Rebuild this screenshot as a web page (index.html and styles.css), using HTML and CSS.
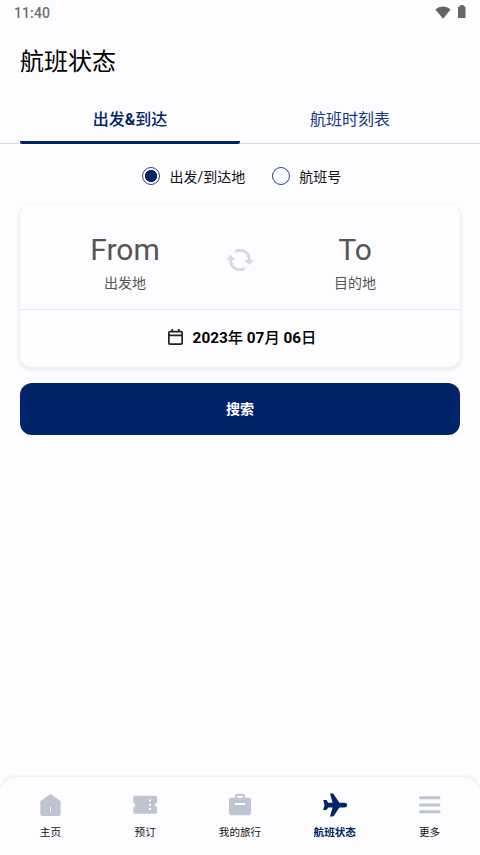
FILE: index.html
```html
<!DOCTYPE html>
<html lang="zh-CN">
<head>
<meta charset="utf-8">
<meta name="viewport" content="width=device-width, initial-scale=1">
<title>航班状态</title>
<link rel="stylesheet" href="styles.css">
</head>
<body>
<div class="screen">
  <div class="status-bar">
    <span class="clock">11:40</span>
    <div class="status-icons">
      <svg class="wifi" width="16" height="13" viewBox="0 0 16 13"><path d="M0.4 3.6C4.8-.4 11.200-.4 15.600 3.600L8 12.700z"/></svg>
      <svg class="battery" width="8" height="14" viewBox="0 0 8 14"><path d="M2.300 0h3.400v1.500H7q.5 0 .5.500v10.500q0 .5-.5.500H.5q-.5 0-.5-.5V2q0-.5.5-.5h1.800z"/></svg>
    </div>
  </div>
  <h1 class="title">航班状态</h1>
  <div class="tabs">
    <div class="tab tab-active">出发<b>&amp;</b>到达</div>
    <div class="tab">航班时刻表</div>
  </div>
  <div class="radios">
    <div class="radio"><span class="dot dot-on"></span><span>出发/到达地</span></div>
    <div class="radio"><span class="dot"></span><span>航班号</span></div>
  </div>
  <div class="card">
    <div class="route">
      <div class="place"><div class="code">From</div><div class="hint">出发地</div></div>
      <svg class="swap" width="28" height="22" viewBox="0 0 28 22">
        <path class="arc" d="M9.200 2.700A9.200 9.200 0 0 1 23.200 11.500M18.800 19.300A9.200 9.200 0 0 1 4.800 10.500"/>
        <path d="M18.300 11h9.700l-4.800 5zM0 11h9.700L4.800 5.700z"/>
      </svg>
      <div class="place"><div class="code">To</div><div class="hint">目的地</div></div>
    </div>
    <div class="date">
      <svg width="15" height="16" viewBox="0 0 15 16"><rect x=".85" y="2.700" width="13.300" height="12.400" rx="1"/><path d="M1 6.300h13M4.200 0v3M10.800 0v3"/></svg>
      <span class="date-text"><b>2023</b>年 <b>07</b>月 <b>06</b>日</span>
    </div>
  </div>
  <div class="search">搜索</div>
  <div class="nav">
    <div class="nav-item">
      <svg width="28" height="24" viewBox="0 0 28 24"><path d="M14.500 1L5.200 7.600Q4.300 8.200 4.300 9.300v11.700q0 2 2 2h16.300q2 0 2-2V9.300q0-1.100-.8-1.700z"/><path class="hole" d="M14.500 14v5.500"/></svg>
      <span>主页</span>
    </div>
    <div class="nav-item">
      <svg width="28" height="24" viewBox="0 0 28 24"><path d="M3.800 2.800h20.700q1.500 0 1.500 1.500v5.600a2 2 0 0 0 0 4v5.400q0 1.500-1.500 1.500H3.800q-1.500 0-1.500-1.500v-5.400a2 2 0 0 0 0-4V4.300q0-1.500 1.500-1.500z"/><path class="hole dots" d="M19 6.500v11"/></svg>
      <span>预订</span>
    </div>
    <div class="nav-item">
      <svg width="28" height="24" viewBox="0 0 28 24"><path d="M5 4.700h4V3.200Q9 .8 11.400.8h5.200Q19 .8 19 3.200v1.500h4q2 0 2 2v13.500q0 2-2 2H5q-2 0-2-2V6.700q0-2 2-2zm6 0h6V3.600q0-.8-.8-.8h-4.400q-.8 0-.8.800z"/><path class="hole bar" d="M9 11h10"/></svg>
      <span>我的旅行</span>
    </div>
    <div class="nav-item nav-active">
      <svg width="28" height="24" viewBox="0 0 28 24"><path d="M9 .6h2.600q.8 0 1.300.8l5.500 8.300h5.200q2.700.2 2.700 2.400t-2.700 2.400h-5.200l-5.500 8.200q-.5.800-1.300.8H9l2.600-9H7.200l-1.800 2.600H2.200l1.300-5-1.300-5h3.200l1.800 2.600h4.400z"/></svg>
      <span>航班状态</span>
    </div>
    <div class="nav-item">
      <svg width="28" height="24" viewBox="0 0 28 24"><path class="lines" d="M4.500 4.800h18.500M4.500 11.900h18.500M4.500 18.800h18.500"/></svg>
      <span>更多</span>
    </div>
  </div>
</div>
</body>
</html>
```
FILE: styles.css
```css
* { box-sizing: border-box; }
body {
  margin: 0;
  background: #fdfdff;
  color: #111;
  font-family: Roboto, "Noto Sans CJK SC", sans-serif;
}
svg { display: block; flex: none; }
.screen { display: flex; flex-direction: column; height: 855px; overflow: hidden; }
.status-bar {
  display: flex;
  justify-content: space-between;
  height: 26px;
  padding: 0 14px;
}
.clock { font-size: 14px; font-weight: 500; line-height: 26px; color: #707070; letter-spacing: .1px; }
.status-icons { display: flex; gap: 7px; padding-top: 5px; fill: #656565; }
.wifi { margin-top: 1px; }
.title {
  margin: 0;
  padding: 2px 20px 0;
  height: 69px;
  font-size: 24px;
  font-weight: 400;
  line-height: 69px;
  color: #000;
}
.tabs {
  display: flex;
  height: 49px;
  padding: 0 20px;
  box-shadow: inset 0 -1px #d0d9e8;
}
.tab {
  flex: 1;
  height: 49px;
  font-size: 16px;
  line-height: 50px;
  text-align: center;
  color: #12387f;
}
.tab-active {
  font-weight: 500;
  color: #00246a;
  background: linear-gradient(#00246a, #00246a) 0 46px / 100% 3px no-repeat;
  border-radius: 0 0 2px 2px;
}
.radios { display: flex; gap: 27px; padding: 22px 0 0 142.400px; height: 60px; }
.radio {
  display: flex;
  align-items: center;
  gap: 9px;
  height: 19px;
  font-size: 14px;
  white-space: nowrap;
}
.dot {
  width: 18px;
  height: 18px;
  border: 1px solid #24458a;
  border-radius: 50%;
}
.dot-on { background: radial-gradient(circle, #00246a 5.700px, transparent 6.300px); }
.card {
  height: 163px;
  margin: 0 20px;
  border-radius: 12px;
  background: #fdfdff;
  box-shadow: 0 2px 3px 2px rgba(0, 0, 0, .06);
}
.route {
  display: grid;
  grid-template-columns: 210px 20px 210px;
  justify-items: center;
  height: 106px;
  border-bottom: 1px solid #e4e7f0;
}
.place { padding-top: 26px; text-align: center; color: #555; }
.code { font-size: 30px; line-height: 40px; }
.hint { font-size: 14px; line-height: 20px; margin-top: 3px; }
.swap { margin-top: 45px; fill: #d9dae0; }
.arc { fill: none; stroke: #d9dae0; stroke-width: 3; }
.date {
  display: flex;
  justify-content: center;
  align-items: center;
  gap: 10px;
  height: 54px;
  padding-left: 4px;
  font-size: 15.300px;
  font-weight: 500;
  color: #000;
}
.date-text { padding-bottom: 2px; }
.date svg { fill: none; stroke: #222; stroke-width: 1.700; }
.search {
  height: 52px;
  margin: 16px 20px 0;
  border-radius: 12px;
  background: #00246a;
  color: #fff;
  font-size: 14px;
  font-weight: 700;
  line-height: 52px;
  text-align: center;
}
.nav {
  display: flex;
  justify-content: space-between;
  height: 78px;
  margin-top: auto;
  padding: 16px 3px 0;
  border-radius: 16px 16px 0 0;
  box-shadow: 0 -1px 2px 1px rgba(0, 0, 0, .05);
}
.nav-item {
  display: flex;
  flex: 1;
  flex-direction: column;
  align-items: center;
  gap: 8px;
  font-size: 10.600px;
  line-height: 16px;
  fill: #bfc4d2;
}
.nav-active { color: #00246a; font-weight: 700; fill: #00246a; }
.hole { stroke: #fdfdff; stroke-width: 1; }
.dots { stroke-width: 2; stroke-dasharray: 2 2.300; }
.bar { stroke-width: 2; }
.lines { fill: none; stroke: #bfc4d2; stroke-width: 3; stroke-linecap: round; }
```
